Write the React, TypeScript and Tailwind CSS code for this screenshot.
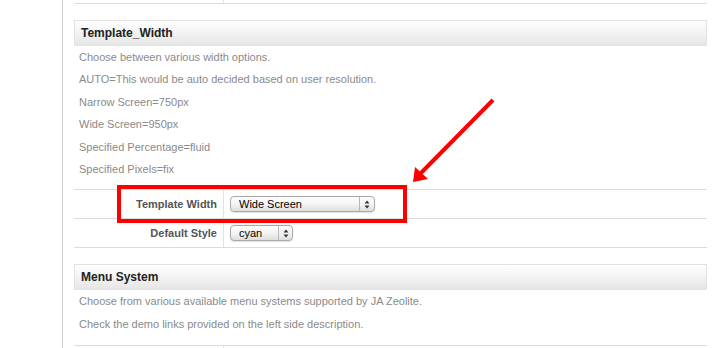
import { FC } from "react";

const font = { fontFamily: '"Liberation Sans", Arial, Helvetica, sans-serif' };

const SelectBox: FC<{ value: string; width: string; arrowAt: string }> = ({ value, width, arrowAt }) => (
  <div
    className={`flex h-[16px] items-stretch overflow-hidden rounded-[4px] border border-[#a9a9a9] bg-gradient-to-b from-white via-[#f4f4f4] to-[#dedede] shadow-[0_1px_1px_rgba(0,0,0,0.12)] ${width}`}
  >
    <span className={`flex items-center pl-[8px] text-[11px] leading-none text-black ${arrowAt}`}>{value}</span>
    <span className="flex flex-1 items-center justify-center border-l border-[#b8b8b8]">
      <svg width="6" height="9" viewBox="0 0 6 9">
        <path d="M3 0.5 L5.5 3.5 H0.5 Z" fill="#333" />
        <path d="M3 8.5 L5.5 5.5 H0.5 Z" fill="#333" />
      </svg>
    </span>
  </div>
);

const Header: FC<{ title: string }> = ({ title }) => (
  <div className="flex h-[26px] items-center border border-[#e2e2e2] bg-gradient-to-b from-white to-[#e6e6e6] pl-[6px]">
    <h3 className="text-[12px] font-bold text-[#222]">{title}</h3>
  </div>
);

const Row: FC<{ label: string; children: React.ReactNode }> = ({ label, children }) => (
  <div className="flex h-[29px] border-b border-[#dcdcdc]">
    <div className="flex w-[150px] items-center justify-end border-r border-[#e2e2e2] pr-[6px] text-[11px] font-bold text-[#555]">
      {label}
    </div>
    <div className="flex items-center pl-[6px]">{children}</div>
  </div>
);

const App: FC = () => {
  const widthNotes = [
    "Choose between various width options.",
    "AUTO=This would be auto decided based on user resolution.",
    "Narrow Screen=750px",
    "Wide Screen=950px",
    "Specified Percentage=fluid",
    "Specified Pixels=fix",
  ];
  const menuNotes = [
    "Choose from various available menu systems supported by JA Zeolite.",
    "Check the demo links provided on the left side description.",
  ];

  return (
    <div className="relative flex h-[348px] w-[716px] overflow-hidden bg-white" style={font}>
      <div className="w-[63px] shrink-0 border-r border-[#d0d0d0]" />
      <div className="ml-[11px] w-[633px] shrink-0">
        {/* previous param row, cut off at the top */}
        <div className="flex h-[4px] border-b border-[#dcdcdc]">
          <div className="w-[150px] border-r border-[#e2e2e2]" />
        </div>

        <div className="mt-[16px]">
          <Header title="Template_Width" />
        </div>
        <div className="pl-[5px] pb-[9px]">
          {widthNotes.map((t) => (
            <p key={t} className="text-[11px] leading-[22.4px] text-[#8a8a8a]">
              {t}
            </p>
          ))}
        </div>

        <div className="border-t border-[#dcdcdc]">
          <Row label="Template Width">
            <SelectBox value="Wide Screen" width="w-[145px]" arrowAt="w-[128px]" />
          </Row>
          <Row label="Default Style">
            <SelectBox value="cyan" width="w-[63px]" arrowAt="w-[47px]" />
          </Row>
        </div>

        <div className="mt-[16px]">
          <Header title="Menu System" />
        </div>
        <div className="pl-[5px] pb-[10px]">
          {menuNotes.map((t) => (
            <p key={t} className="text-[11px] leading-[22.4px] text-[#8a8a8a]">
              {t}
            </p>
          ))}
        </div>
        <div className="flex h-[10px] border-t border-[#dcdcdc]">
          <div className="w-[150px] border-r border-[#e2e2e2]" />
        </div>
      </div>

      {/* annotation: red box + arrow */}
      <div className="absolute left-[117px] top-[185px] h-[38px] w-[290px] border-4 border-[#ff0000]" />
      <svg className="absolute left-0 top-0" width="716" height="348">
        <line x1="493" y1="100" x2="420" y2="174" stroke="#ff0000" strokeWidth="4" />
        <path d="M413 182 L415 167 L428 179 Z" fill="#ff0000" />
      </svg>
    </div>
  );
};

export default App;
